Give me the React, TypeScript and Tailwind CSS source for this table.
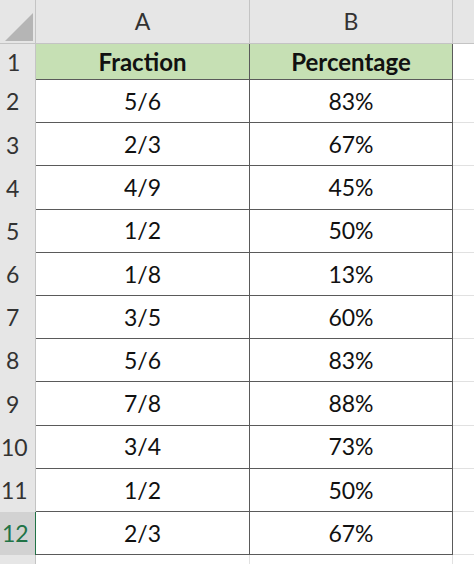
import React from "react";

const rows: [string, string][] = [
  ["5/6", "83%"],
  ["2/3", "67%"],
  ["4/9", "45%"],
  ["1/2", "50%"],
  ["1/8", "13%"],
  ["3/5", "60%"],
  ["5/6", "83%"],
  ["7/8", "88%"],
  ["3/4", "73%"],
  ["1/2", "50%"],
  ["2/3", "67%"],
];

export default function App() {
  return (
    <div
      className="w-[474px] h-[564px] overflow-hidden bg-white text-[#111]"
      style={{ fontFamily: "Lato, 'Open Sans', sans-serif" }}
    >
      {/* column header row */}
      <div className="flex h-[44px] bg-[#e6e6e6] border-b border-[#c4c4c4]">
        <div className="w-[36px] shrink-0 relative border-r border-[#c4c4c4]">
          <svg className="absolute right-[2px] bottom-[2px]" width="28" height="28" viewBox="0 0 28 28">
            <polygon points="28,0 28,28 0,28" fill="#b5b5b5" />
          </svg>
        </div>
        <div className="w-[214px] shrink-0 flex items-center justify-center text-[23px] text-[#333] border-r border-[#c4c4c4]">
          A
        </div>
        <div className="w-[203px] shrink-0 flex items-center justify-center text-[23px] text-[#333] border-r border-[#c4c4c4]">
          B
        </div>
        <div className="flex-1" />
      </div>

      {/* row 1 */}
      <div className="flex h-[36px]">
        <div className="w-[36px] shrink-0 bg-[#e6e6e6] border-r border-[#c4c4c4] flex items-center pl-[7px] text-[23px] text-[#333]">
          1
        </div>
        <div className="w-[214px] shrink-0 bg-[#c6e0b4] border-r border-b border-[#5a5a5a] flex items-center justify-center text-[24px] font-bold">
          Fraction
        </div>
        <div className="w-[203px] shrink-0 bg-[#c6e0b4] border-r border-b border-[#5a5a5a] flex items-center justify-center text-[24px] font-bold">
          Percentage
        </div>
        <div className="flex-1 border-b border-[#e1e1e1]" />
      </div>

      {rows.map(([f, p], i) => {
        const n = i + 2;
        const selected = n === 12;
        return (
          <div key={n} className="flex h-[43.2px]">
            <div
              className={
                selected
                  ? "w-[36px] shrink-0 bg-[#d2d2d2] border-r border-[#217346] flex items-center pl-[2px] text-[23px] text-[#217346]"
                  : "w-[36px] shrink-0 bg-[#e6e6e6] border-r border-[#c4c4c4] flex items-center text-[23px] text-[#333] " +
                    (n >= 10 ? "pl-[1px]" : "pl-[6px]")
              }
            >
              {n}
            </div>
            <div className="w-[214px] shrink-0 border-r border-b border-[#5a5a5a] flex items-center justify-center text-[23px]">
              {f}
            </div>
            <div className="w-[203px] shrink-0 border-r border-b border-[#5a5a5a] flex items-center justify-center text-[23px]">
              {p}
            </div>
            <div className="flex-1 border-b border-[#e1e1e1]" />
          </div>
        );
      })}

      <div className="flex h-[20px]">
        <div className="w-[36px] shrink-0 bg-[#e6e6e6] border-r border-[#c4c4c4]" />
        <div className="w-[214px] shrink-0 border-r border-[#e1e1e1]" />
        <div className="w-[203px] shrink-0 border-r border-[#e1e1e1]" />
        <div className="flex-1" />
      </div>
    </div>
  );
}
